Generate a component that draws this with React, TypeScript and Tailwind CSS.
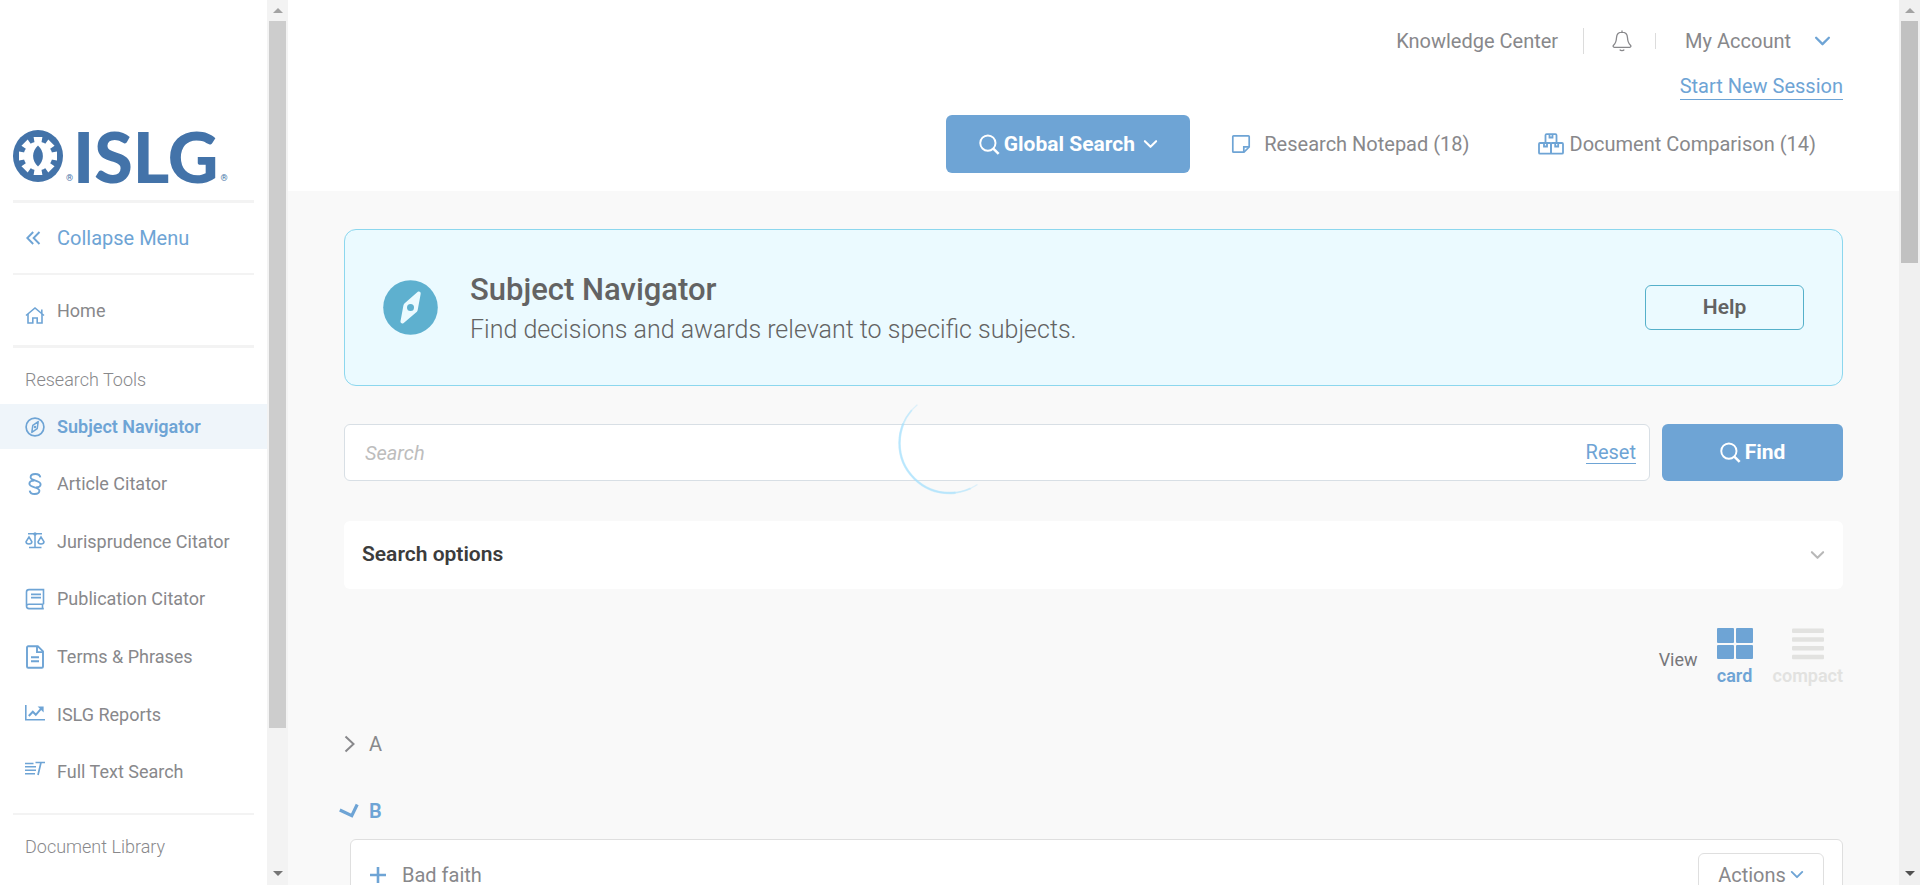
import React, { useState } from "react";

type IconProps = { className?: string };

const ChevronDown = ({ className }: IconProps) => (
  <svg viewBox="0 0 16 16" fill="none" stroke="currentColor" strokeWidth="2.2" className={className} aria-hidden="true">
    <path d="M2 4.500l6 6 6-6" strokeLinecap="round" strokeLinejoin="round" />
  </svg>
);

const Magnifier = ({ className }: IconProps) => (
  <svg viewBox="0 0 22 22" fill="none" stroke="currentColor" strokeWidth="2" className={className} aria-hidden="true">
    <circle cx="9.3" cy="9.5" r="8" />
    <path d="M15 15.2l5.6 5.6" strokeWidth="2.6" />
  </svg>
);

const CollapseIcon = () => (
  <svg width="20" height="20" viewBox="0 0 20 20" fill="none" stroke="currentColor" strokeWidth="1.900" aria-hidden="true">
    <path d="M7.2 4L1.3 10l5.900 6M13.500 4l-5.900 6 5.900 6" />
  </svg>
);

const HomeIcon = () => (
  <svg width="20" height="20" viewBox="0 0 20 20" fill="none" stroke="currentColor" strokeWidth="1.6" aria-hidden="true">
    <path d="M1 10.5L10 3l9 7.5M16.8 4.5v4" />
    <path d="M3 9v9h4.8v-5h4.4v5H17V9" />
  </svg>
);

const CompassIcon = () => (
  <svg width="20" height="20" viewBox="0 0 20 20" fill="none" stroke="currentColor" strokeWidth="1.7" aria-hidden="true">
    <circle cx="10" cy="10" r="8.9" />
    <path d="M13.2 4.6L7.8 8.4 6.8 15.4 12.2 11.6z" strokeWidth="1.5" strokeLinejoin="round" />
    <circle cx="10" cy="10" r="1.2" fill="currentColor" stroke="none" />
  </svg>
);

const SectionIcon = () => (
  <svg width="20" height="22" viewBox="0 0 20 22" fill="none" stroke="currentColor" strokeWidth="1.9" aria-hidden="true">
    <path d="M15.3 4.4C15 2 13 1 10.4 1 7.6 1 5.600 2.200 5.600 4.200c0 4 10 2.800 10 7 0 2-1.900 3.200-4.800 3.200" />
    <path d="M4.700 17.600C5 20 7 21 9.600 21c2.800 0 4.800-1.200 4.800-3.200 0-4-10-2.800-10-7 0-2 1.900-3.200 4.800-3.200" />
  </svg>
);

const ScalesIcon = () => (
  <svg width="20" height="20" viewBox="0 0 20 20" fill="none" stroke="currentColor" strokeWidth="1.5" aria-hidden="true">
    <path d="M3 1.700h14M10 1v14M4 15.600h12.500" />
    <path d="M4 5L1 9.800c0 1.400 1.200 2.200 2.900 2.200s3-.8 3-2.200L4 5zM16 5l-3 4.800c0 1.400 1.300 2.200 3 2.200s3-.8 3-2.200L16 5z" />
    <circle cx="10" cy="2" r="1.700" fill="currentColor" stroke="none" />
  </svg>
);

const BookIcon = () => (
  <svg width="20" height="22" viewBox="0 0 20 22" fill="none" stroke="currentColor" strokeWidth="1.6" aria-hidden="true">
    <path d="M18.500 16.200V1.600H4C2.400 1.600 1.500 2.500 1.500 4v14c0 1.600 1 2.600 2.500 2.600h14.800M18.500 16.200H4c-1.500 0-2.500.8-2.500 2M17.500 16v4.600" />
    <path d="M6 6.300h10M6 9.600h10" strokeWidth="1.800" />
  </svg>
);

const DocIcon = () => (
  <svg width="20" height="24" viewBox="0 0 20 24" fill="none" stroke="currentColor" strokeWidth="1.900" aria-hidden="true">
    <path d="M2 2.500C2 1.700 2.500 1.200 3.200 1.200h9.600L18 6.400v15c0 .8-.5 1.300-1.200 1.300H3.200c-.7 0-1.200-.5-1.200-1.300z" />
    <path d="M12 1.500v5.600h5.800M6 12.300h8M6 16.300h8" />
  </svg>
);

const ReportIcon = () => (
  <svg width="20" height="20" viewBox="0 0 20 20" fill="none" stroke="currentColor" strokeWidth="1.600" aria-hidden="true">
    <path d="M.8 0v14.800H20" />
    <path d="M3.800 11l4-4.200 3 3 5.800-6.600" strokeWidth="2" />
    <path d="M12.600 1.500h6v6z" fill="currentColor" stroke="none" />
  </svg>
);

const FullTextIcon = () => (
  <svg width="20" height="22" viewBox="0 0 20 22" fill="none" stroke="currentColor" strokeWidth="1.500" aria-hidden="true">
    <path d="M0 2.500h8.500M0 5.800h11M0 9.200h11M0 12.700h10" />
    <path d="M10.500 1.500H20M16 1.500L13 14" strokeWidth="1.700" />
  </svg>
);

const NoteIcon = () => (
  <svg width="20" height="20" viewBox="0 0 20 20" fill="none" stroke="currentColor" strokeWidth="1.700" aria-hidden="true">
    <path d="M2.600 1.800h14.800c.5 0 .8.3.8.800V13l-5.200 5.200H2.600c-.5 0-.8-.3-.8-.8V2.600c0-.5.300-.8.800-.8z" />
    <path d="M12.800 18v-5.200H18" />
  </svg>
);

const BoxesIcon = () => (
  <svg width="26" height="22" viewBox="0 0 26 22" fill="none" stroke="currentColor" strokeWidth="1.800" aria-hidden="true">
    <path d="M7.500 10V2.200c0-.7.400-1.100 1.100-1.100h8.800c.7 0 1.100.4 1.100 1.100V10" />
    <rect x="1" y="10" width="12" height="10.700" rx="1" />
    <rect x="13" y="10" width="12" height="10.700" rx="1" />
    <path d="M11.500 1.500v3h3v-3M6 10.500v3h3v-3M17.200 10.500v3h3v-3" />
  </svg>
);

const BellIcon = () => (
  <svg width="20" height="22" viewBox="0 0 20 22" fill="none" stroke="currentColor" strokeWidth="1.300" aria-hidden="true">
    <path d="M10 2.200c-3.300 0-5.300 2.200-5.500 5.600-.2 4-.8 5.600-3 7.400-.8.900-.4 2.100.8 2.100h15.400c1.200 0 1.600-1.200.8-2.100-2.200-1.800-2.800-3.400-3-7.400-.2-3.400-2.200-5.600-5.500-5.600z" />
    <path d="M10 .6v1.600M7.700 19.600c1.100 1.400 3.500 1.400 4.600 0" />
  </svg>
);

const Emblem = () => (
  <svg width="50" height="52" viewBox="0 0 50 52" className="shrink-0" aria-hidden="true">
    <ellipse cx="25" cy="26" rx="25" ry="26" fill="#4373a9" />
    <g fill="#fff">
      {[0, 45, 90, 135].map((a) => (
        <path key={a} transform={`rotate(${a} 25 26)`} d="M20.600 7h8.800l-1.200 7v24l1.200 7h-8.800l1.200-7V14z" />
      ))}
      <circle cx="25" cy="26" r="14.300" />
    </g>
    <path d="M25 15.500c3 2.800 4.900 6.300 4.900 10.500S28 33.700 25 36.500c-3-2.800-4.900-6.300-4.900-10.500S22 18.300 25 15.500z" fill="#4373a9" />
  </svg>
);

const BannerCompass = () => (
  <svg width="55" height="55" viewBox="0 0 55 55" className="shrink-0" aria-hidden="true">
    <circle cx="27.500" cy="27.500" r="27.300" fill="#5eb0cf" />
    <path d="M34.800 11.800c1.500-.8 3 .2 2.900 1.900l-2.900 15.800c-.1.700-.4 1.700-.9 2.200L20.400 43.200c-1.500.8-3.100-.2-2.900-1.900L20.400 25.500c.1-.7.500-1.500 1-2z" fill="#ebfaff" />
    <circle cx="27.500" cy="27.500" r="3.500" fill="#5eb0cf" />
  </svg>
);

const GridIcon = () => (
  <svg width="36" height="32" viewBox="0 0 36 32" fill="currentColor" aria-hidden="true">
    <rect width="17" height="15" rx="1" />
    <rect x="19" width="17" height="15" rx="1" />
    <rect y="17" width="17" height="14" rx="1" />
    <rect x="19" y="17" width="17" height="14" rx="1" />
  </svg>
);

const LinesIcon = () => (
  <svg width="32" height="32" viewBox="0 0 32 32" fill="currentColor" aria-hidden="true">
    <rect y="0.500" width="32" height="4.500" rx="1" />
    <rect y="9.300" width="32" height="4.500" rx="1" />
    <rect y="18.100" width="32" height="4.500" rx="1" />
    <rect y="26.800" width="32" height="4.500" rx="1" />
  </svg>
);

const Spinner = () => (
  <svg width="104" height="104" viewBox="-51.500 -52 104 104" fill="none" stroke="#a5e0fd" aria-hidden="true">
    <circle r="50" pathLength="360" strokeDasharray="174 186" strokeDashoffset="-56" strokeWidth="1.200" strokeOpacity=".35" />
    <circle r="50" pathLength="360" strokeDasharray="156 204" strokeDashoffset="-65" strokeWidth="1.900" strokeOpacity=".4" />
    <circle r="50" pathLength="360" strokeDasharray="120 240" strokeDashoffset="-83" strokeWidth="2.500" strokeOpacity=".45" />
  </svg>
);

function Scrollbar({ tone }: { tone: "page" | "menu" }) {
  const page = tone === "page";
  return (
    <div className={`flex w-[21px] shrink-0 flex-col items-center ${page ? "bg-[#f0f0f0] text-[#505050]" : "bg-[#f3f3f3] text-[#757575]"}`} aria-hidden="true">
      <div className="flex h-[21px] shrink-0 items-center text-[#a3a3a3]">
        <svg width="10" height="5" viewBox="0 0 10 5" fill="currentColor"><path d="M0 5l5-5 5 5z" /></svg>
      </div>
      <div className="flex w-[17px] flex-1 flex-col">
        <div className={page ? "h-[242px] bg-[#c1c1c1]" : "h-[707px] bg-[#cdcdcd]"} />
      </div>
      <div className="flex h-[23px] shrink-0 items-center">
        <svg width="10" height="5" viewBox="0 0 10 5" fill="currentColor"><path d="M0 0h10L5 5z" /></svg>
      </div>
    </div>
  );
}

const tools = [
  { label: "Subject Navigator", Icon: CompassIcon, active: true },
  { label: "Article Citator", Icon: SectionIcon },
  { label: "Jurisprudence Citator", Icon: ScalesIcon },
  { label: "Publication Citator", Icon: BookIcon },
  { label: "Terms & Phrases", Icon: DocIcon },
  { label: "ISLG Reports", Icon: ReportIcon },
  { label: "Full Text Search", Icon: FullTextIcon },
];

function Sidebar() {
  return (
    <aside className="flex w-[288px] shrink-0 overflow-hidden bg-white">
      <div className="flex-1 pt-[130px] text-lg leading-6 whitespace-nowrap text-[#88888b]">
        <a href="#" aria-label="ISLG" className="mx-[13px] flex h-[70px] items-start text-[#4373a9]">
          <Emblem />
          <span className="flex h-[53px] w-[10px] items-end justify-end text-[9px] leading-[10px]">®</span>
          <span className="font-['Lato',sans-serif] text-[70px] leading-[52px] font-black">ISLG</span>
          <span className="flex h-[53px] items-end pl-[2px] text-[9px] leading-[10px]">®</span>
        </a>
        <hr className="mx-[13px] border-t-[3px] border-[#f3f3f3]" />
        <button type="button" className="flex h-[70px] w-full items-center gap-[11px] pl-[26px] text-xl text-[#6ea4d5]">
          <CollapseIcon />
          Collapse Menu
        </button>
        <hr className="mx-[13px] border-t-2 border-[#f3f3f3]" />
        <a href="#" className="flex h-[70px] items-center gap-[12px] pt-[2px] pl-[25px]">
          <span className="pt-2 text-[#6ea4d5]"><HomeIcon /></span>
          Home
        </a>
        <hr className="mx-[13px] border-t-[3px] border-[#f3f3f3]" />
        <h2 className="flex h-[56px] items-center pt-2 pl-[25px] font-light">Research Tools</h2>
        <ul className="flex h-[391px] flex-col justify-between">
          {tools.map(({ label, Icon, active }) => (
            <li key={label}>
              <a
                href="#"
                aria-current={active ? "page" : undefined}
                className={`flex h-[45px] items-center gap-[12px] pl-[25px] ${active ? "bg-[#eff5fa] font-semibold text-[#6ea4d5]" : ""}`}
              >
                <span className="text-[#6ea4d5]"><Icon /></span>
                {label}
              </a>
            </li>
          ))}
        </ul>
        <hr className="mx-[13px] mt-[18px] border-t-2 border-[#f3f3f3]" />
        <h2 className="flex h-[64px] items-center pl-[25px] font-light">Document Library</h2>
      </div>
      <Scrollbar tone="menu" />
    </aside>
  );
}

function Header() {
  return (
    <header className="flex h-[191px] shrink-0 flex-col items-end bg-white px-[56px] text-xl leading-6 text-[#88888b]">
      <div className="flex h-[62px] items-end pb-[8px]">
        <nav className="flex items-center pr-3">
          <a href="#" className="pr-[25px]">Knowledge Center</a>
          <span className="h-[26px] w-px bg-[#dcdcdc]" />
          <button type="button" aria-label="Notifications" className="pr-[23px] pl-7"><BellIcon /></button>
          <span className="h-4 w-px bg-[#dcdcdc]" />
          <button type="button" className="flex items-center gap-[23px] pl-[29px]">
            My Account
            <ChevronDown className="size-[17px] text-[#6ea4d5]" />
          </button>
        </nav>
      </div>
      <a href="#" className="mt-3 border-b border-[#6ea4d5] pb-px text-[#6ea4d5]">Start New Session</a>
      <div className="mt-[15px] flex items-center pr-[27px]">
        <button type="button" className="flex h-[58px] w-[244px] items-center justify-center gap-1 rounded-md bg-[#6ea4d5] text-[21px] font-bold text-white">
          <Magnifier className="size-[21px]" />
          Global Search
          <ChevronDown className="ml-1 size-[15px]" />
        </button>
        <a href="#" className="ml-[41px] flex items-center gap-[13px]">
          <span className="text-[#6ea4d5]"><NoteIcon /></span>
          Research Notepad (18)
        </a>
        <a href="#" className="ml-[68px] flex items-center gap-[6px]">
          <span className="text-[#6ea4d5]"><BoxesIcon /></span>
          Document Comparison (14)
        </a>
      </div>
    </header>
  );
}

export default function App() {
  const [query, setQuery] = useState("");
  return (
    <div className="flex h-screen overflow-hidden bg-[#f9f9f9] font-['Roboto','Liberation_Sans',sans-serif]">
      <div className="relative flex min-w-0 flex-1">
        <Sidebar />
        <div className="flex min-w-0 flex-1 flex-col overflow-hidden">
          <Header />
          <main className="px-[56px] pt-[38px] text-[#88888b]">
            <section className="flex h-[157px] items-center rounded-xl border border-[#8cd7ee] bg-[#ebfaff] px-[38px]">
              <BannerCompass />
              <div className="ml-8 flex-1 pt-1 text-[#636363]">
                <h1 className="text-[31px] leading-10 font-medium">Subject Navigator</h1>
                <p className="text-[25px] leading-10 font-light">Find decisions and awards relevant to specific subjects.</p>
              </div>
              <button type="button" className="h-[45px] w-[159px] rounded-md border border-[#55b0ca] text-[21px] font-semibold text-[#636363]">Help</button>
            </section>

            <form className="mt-[38px] flex gap-3" onSubmit={(e) => e.preventDefault()}>
              <div className="flex h-[57px] flex-1 items-center rounded-md border border-[#d8dfe5] bg-white pr-[13px] pl-5">
                <input
                  aria-label="Search"
                  placeholder="Search"
                  value={query}
                  onChange={(e) => setQuery(e.target.value)}
                  className="min-w-0 flex-1 bg-transparent text-xl text-[#444] outline-none placeholder:text-[#bdbdbd] placeholder:italic"
                />
                <button type="button" onClick={() => setQuery("")} className="border-b border-[#6ea4d5] text-xl leading-[22px] text-[#6ea4d5]">Reset</button>
              </div>
              <button type="submit" className="flex h-[57px] w-[181px] items-center justify-center gap-1 rounded-md bg-[#6ea4d5] text-[21px] font-bold text-white">
                <Magnifier className="size-[21px]" />
                Find
              </button>
            </form>

            <button type="button" className="mt-10 flex h-[68px] w-full items-center justify-between rounded-md bg-white px-[18px] text-[21px] font-semibold text-[#3c3c3c]">
              Search options
              <ChevronDown className="size-[15px] text-[#b8b8b8]" />
            </button>

            <div className="mt-[39px] flex h-[60px] items-start justify-end text-lg leading-6">
              <span className="pt-5 text-[#77777b]">View</span>
              <button type="button" className="ml-[19px] flex flex-col items-center gap-1 font-semibold text-[#6ea4d5]">
                <GridIcon />
                card
              </button>
              <button type="button" className="ml-[20px] flex flex-col items-center gap-1 font-semibold text-[#e2e2e0]">
                <LinesIcon />
                compact
              </button>
            </div>

            <button type="button" className="mt-[41px] flex h-[30px] items-center gap-[14px] text-xl">
              <svg width="11" height="18" viewBox="0 0 11 18" fill="none" stroke="currentColor" strokeWidth="2" aria-hidden="true">
                <path d="M1.500 1.500L9.500 9l-8 7.500" />
              </svg>
              A
            </button>

            <button type="button" className="mt-[37px] flex h-[30px] items-center gap-[10px] text-xl font-semibold text-[#6ea4d5]">
              <svg width="20" height="16" viewBox="0 0 20 16" fill="none" stroke="currentColor" strokeWidth="3.200" className="-ml-[5px]" aria-hidden="true">
                <path d="M.8 7l12 5.600L18.200 1.500" />
              </svg>
              B
            </button>

            <div className="mt-[13px] ml-[6px] flex h-[72px] items-center justify-between rounded-md border border-[#dfdfdf] bg-white pr-[18px] pl-[19px]">
              <button type="button" className="flex items-center gap-4 text-xl">
                <svg width="16" height="16" viewBox="0 0 16 16" stroke="#6ea4d5" strokeWidth="2.600" aria-hidden="true">
                  <path d="M8 0v16M0 8h16" />
                </svg>
                Bad faith
              </button>
              <button type="button" className="flex h-[45px] w-[126px] items-center justify-center gap-1 rounded-md border border-[#dfdfdf] text-xl">
                Actions
                <ChevronDown className="size-[14px] text-[#6ea4d5]" />
              </button>
            </div>
          </main>
        </div>
        <div className="pointer-events-none absolute inset-0 flex items-center justify-center">
          <Spinner />
        </div>
      </div>
      <Scrollbar tone="page" />
    </div>
  );
}
